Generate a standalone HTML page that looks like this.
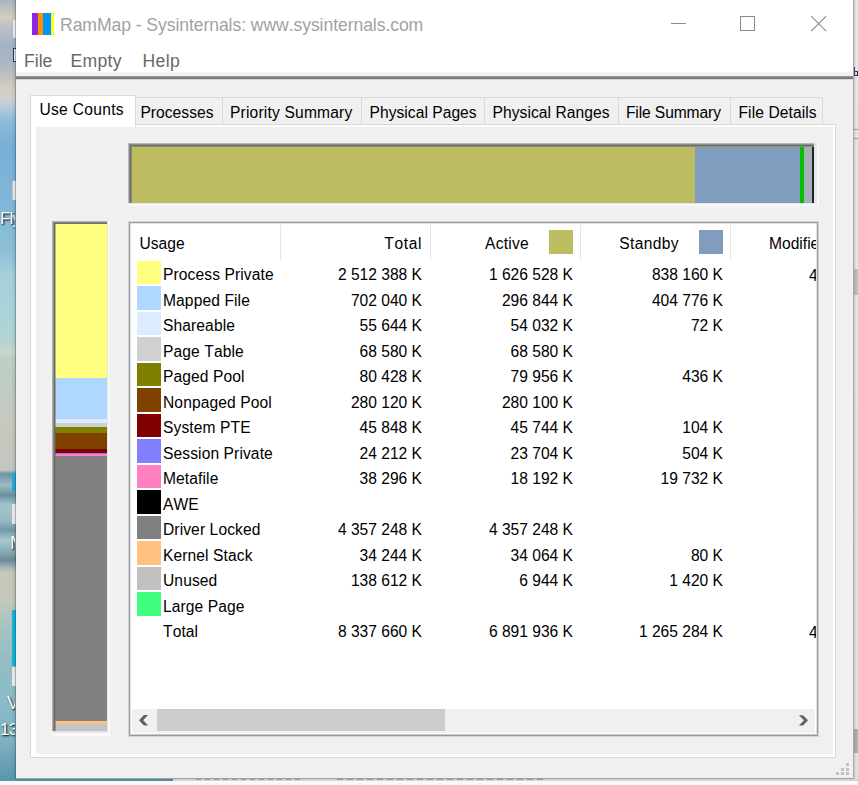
<!DOCTYPE html>
<html><head><meta charset="utf-8">
<style>
*{margin:0;padding:0;box-sizing:border-box}
html,body{width:858px;height:785px;overflow:hidden;background:#e9e9e9;font-family:"Liberation Sans",sans-serif;position:relative}
div,span,svg{position:absolute;display:block}
.t{white-space:pre;line-height:1;font-kerning:none}
.tt{font-size:17.6px;color:#a2a2a2}
.mn{font-size:17.6px;color:#686868}
.tb{font-size:15.6px;color:#000}
.lv{font-size:15.6px;color:#000}
</style></head><body>

<div style="left:0px;top:0px;width:16px;height:785px;background:linear-gradient(to bottom,#a8b4c0 0px,#c4c4c0 10px,#d4ccc0 17px,#b8c0c8 28px,#a4b4c4 45px,#a8b6c2 62px,#c0c0c0 76px,#d6ccc0 88px,#ccd0d4 100px,#b0c8dc 110px,#90bcdc 120px,#80b4d8 135px,#78b0d8 150px,#80b6d8 200px,#8cc0d8 250px,#a4d0dc 275px,#acd4d8 320px,#b8d4d0 345px,#cfd6c6 352px,#bcd0c8 358px,#c2ccc2 390px,#c6c8bf 430px,#c2c6be 470px,#6a94a4 474px,#9cbcc6 485px,#6890a0 495px,#a4c4cc 505px,#98bcc4 520px,#7098a8 530px,#a8c8d0 540px,#88aab4 552px,#6a8a96 560px,#a8b8b8 568px,#c8c8b8 573px,#c4c8bc 600px,#a8c4c4 625px,#94bcc4 660px,#8cbcc8 700px,#7eb2c2 740px,#5a98b0 778px,#5a98b0 781px,#f4f4f4 781px)"></div>
<div style="left:13px;top:20px;width:3px;height:18px;background:#f4f4f4"></div>
<div style="left:13px;top:48px;width:3px;height:14px;background:#f0f0f0;border-left:1px solid #303848;border-top:1px solid #303848;border-bottom:1px solid #303848"></div>
<div style="left:12px;top:181px;width:4px;height:19px;background:#f0f0f0;border-left:1px solid #c8c8c8"></div>
<div style="left:12px;top:473px;width:4px;height:18px;background:#20b0e0"></div>
<div style="left:12px;top:504px;width:4px;height:20px;background:#f0f0f0"></div>
<div style="left:12px;top:610px;width:4px;height:56px;background:#10b8e0"></div>
<div style="left:12px;top:667px;width:4px;height:19px;background:#f0f0f0"></div>
<div style="left:0;top:0;width:15px;height:785px;overflow:hidden"><span class="t" style="left:0px;top:210px;font-size:17px;letter-spacing:-1px;color:#fff;text-shadow:1px 1px 2px #000">Fly</span><span class="t" style="left:10px;top:534px;font-size:18px;color:#fff;text-shadow:1px 1px 2px #000">M</span><span class="t" style="left:7px;top:694px;font-size:18px;color:#fff;text-shadow:1px 1px 2px #000">V</span><span class="t" style="left:0px;top:721px;font-size:17px;letter-spacing:-0.5px;color:#fff;text-shadow:1px 1px 2px #000">13</span></div>
<div style="left:16px;top:779px;width:157px;height:3px;background:#4e8aa2"></div>
<div style="left:173px;top:778px;width:685px;height:4px;background:linear-gradient(to bottom,#c8c8c8,#e0e0e0)"></div>
<div style="left:0px;top:781px;width:858px;height:4px;background:#f8f8f8"></div>
<div style="left:196px;top:778px;width:106px;height:2px;background:repeating-linear-gradient(to right,#50607a 0,#50607a 5px,transparent 5px,transparent 9px);opacity:0.5"></div>
<div style="left:337px;top:778px;width:210px;height:2px;background:repeating-linear-gradient(to right,#50607a 0,#50607a 6px,transparent 6px,transparent 10px);opacity:0.5"></div>
<div style="left:854px;top:0px;width:4px;height:779px;background:linear-gradient(to bottom,#eaeaea,#e4e4e4)"></div>
<div style="left:854px;top:67px;width:1px;height:9px;background:#3050a0"></div>
<div style="left:855px;top:71px;width:3px;height:5px;border:1px solid #303030;border-left:none;background:#f0e0b0"></div>
<div style="left:854px;top:129px;width:4px;height:1px;background:#a0a0a0"></div>
<div style="left:854px;top:138px;width:4px;height:1px;background:#a0a0a0"></div>
<div style="left:854px;top:269px;width:4px;height:26px;background:#c0c0c0"></div>
<div style="left:854px;top:729px;width:4px;height:24px;background:#b0b0b0"></div>
<div style="left:854px;top:0px;width:3px;height:779px;background:linear-gradient(to right,rgba(0,0,0,0.12),rgba(0,0,0,0))"></div>
<div style="left:11px;top:0px;width:4px;height:779px;background:linear-gradient(to right,rgba(0,0,0,0),rgba(0,0,0,0.08))"></div>
<div style="left:15px;top:0px;width:1px;height:779px;background:rgba(30,45,55,0.35)"></div>
<div style="left:16px;top:0px;width:838px;height:779px;background:#f0f0f0;border-right:1px solid #a8a8a8;border-bottom:1px solid #a0a0a0"></div>
<div style="left:16px;top:0px;width:837px;height:73px;background:#fff"></div>
<div style="left:32px;top:13px;width:6px;height:22px;background:#8a2be2"></div>
<div style="left:38px;top:13px;width:5px;height:22px;background:#ff9000"></div>
<div style="left:43px;top:13px;width:8px;height:22px;background:#0096ff"></div>
<div style="left:51px;top:13px;width:3px;height:22px;background:#ffff20"></div>
<span class="t tt" style="left:60px;top:17px;letter-spacing:-0.08px">RamMap - Sysinternals: www.sysinternals.com</span>
<div style="left:671px;top:23px;width:15px;height:1px;background:#8a8a8a"></div>
<div style="left:740px;top:16px;width:15px;height:15px;border:1px solid #8a8a8a"></div>
<svg style="left:810px;top:15px" width="18" height="18" viewBox="0 0 18 18"><path d="M1.2 1.2L16.2 16.2M16.2 1.2L1.2 16.2" stroke="#8a8a8a" stroke-width="1.1" fill="none"/></svg>
<span class="t mn" style="left:24px;top:52.5px;">File</span>
<span class="t mn" style="left:70.5px;top:52.5px;letter-spacing:0.3px">Empty</span>
<span class="t mn" style="left:142.5px;top:52.5px;letter-spacing:0.4px">Help</span>
<div style="left:16px;top:72px;width:837px;height:8px;background:linear-gradient(to bottom,#f2f2f2 0,#f2f2f2 4px,#9c9c9c 4px,#9c9c9c 5px,#7a7a7a 5px,#7a7a7a 7px,#d4d4d4 7px,#d4d4d4 8px)"></div>
<div style="left:30px;top:124px;width:806px;height:634px;border:1px solid #d9d9d9;background:#fff"></div>
<div style="left:36px;top:127px;width:797px;height:627px;background:#f0f0f0"></div>
<div style="left:135px;top:97px;width:88px;height:27px;border:1px solid #d9d9d9;border-bottom:none;background:#f0f0f0"></div>
<span class="t tb" style="left:140.4px;top:104.75px;letter-spacing:0.04px">Processes</span>
<div style="left:222px;top:97px;width:140px;height:27px;border:1px solid #d9d9d9;border-bottom:none;background:#f0f0f0"></div>
<span class="t tb" style="left:230px;top:104.75px;letter-spacing:0.18px">Priority Summary</span>
<div style="left:361px;top:97px;width:124px;height:27px;border:1px solid #d9d9d9;border-bottom:none;background:#f0f0f0"></div>
<span class="t tb" style="left:369.5px;top:104.75px;letter-spacing:0.04px">Physical Pages</span>
<div style="left:484px;top:97px;width:135px;height:27px;border:1px solid #d9d9d9;border-bottom:none;background:#f0f0f0"></div>
<span class="t tb" style="left:492.5px;top:104.75px;letter-spacing:0.07px">Physical Ranges</span>
<div style="left:618px;top:97px;width:113px;height:27px;border:1px solid #d9d9d9;border-bottom:none;background:#f0f0f0"></div>
<span class="t tb" style="left:625.9px;top:104.75px;letter-spacing:-0.1px">File Summary</span>
<div style="left:730px;top:97px;width:93px;height:27px;border:1px solid #d9d9d9;border-bottom:none;background:#f0f0f0"></div>
<span class="t tb" style="left:738.5px;top:104.75px;letter-spacing:0.09px">File Details</span>
<div style="left:30px;top:95px;width:106px;height:32px;border:1px solid #d9d9d9;border-bottom:none;background:#fff"></div>
<span class="t tb" style="left:39.4px;top:102px;letter-spacing:0.3px">Use Counts</span>
<div style="left:128px;top:143px;width:691px;height:63px;background:#f8f8f8"></div>
<div style="left:128px;top:143px;width:689px;height:61px;background:#e6e6e6"></div>
<div style="left:128px;top:143px;width:686px;height:60px;background:#b8b8b8"></div>
<div style="left:129px;top:144px;width:685px;height:59px;background:#8c8c8c"></div>
<div style="left:130px;top:145px;width:684px;height:58px;background:#6c6c6c"></div>
<div style="left:131px;top:146px;width:683px;height:57px;background:#8e8c6a"></div>
<div style="left:132px;top:147px;width:563px;height:56px;background:#bebc60"></div>
<div style="left:695px;top:147px;width:105px;height:56px;background:#819dbd"></div>
<div style="left:800px;top:147px;width:3.5px;height:56px;background:#00c000"></div>
<div style="left:803.5px;top:147px;width:8.5px;height:56px;background:#a4afbb"></div>
<div style="left:812px;top:147px;width:2px;height:56px;background:#222222"></div>
<div style="left:131px;top:146px;width:1px;height:57px;background:#8e8c6a"></div>
<div style="left:52px;top:221px;width:58px;height:515px;background:#f8f8f8"></div>
<div style="left:52px;top:221px;width:56px;height:512px;background:#e6e6e6"></div>
<div style="left:52px;top:221px;width:55px;height:510px;background:#b0b0b0"></div>
<div style="left:53px;top:222px;width:54px;height:509px;background:#8a8a8a"></div>
<div style="left:54px;top:223px;width:53px;height:508px;background:#6c6c6c"></div>
<div style="left:55px;top:224px;width:52px;height:153.5px;background:#ffff80"></div>
<div style="left:55px;top:377.5px;width:52px;height:41.5px;background:#b0d8ff"></div>
<div style="left:55px;top:419px;width:52px;height:3.5px;background:#dcebff"></div>
<div style="left:55px;top:422.5px;width:52px;height:4.5px;background:#d0d0d0"></div>
<div style="left:55px;top:427px;width:52px;height:6px;background:#808000"></div>
<div style="left:55px;top:433px;width:52px;height:16.3px;background:#804000"></div>
<div style="left:55px;top:449.3px;width:52px;height:3.3px;background:#800000"></div>
<div style="left:55px;top:452.6px;width:52px;height:1.1px;background:#8080ff"></div>
<div style="left:55px;top:453.7px;width:52px;height:2.1px;background:#ff80c0"></div>
<div style="left:55px;top:455.8px;width:52px;height:265.0px;background:#808080"></div>
<div style="left:55px;top:720.8px;width:52px;height:3.2px;background:#ffc080"></div>
<div style="left:55px;top:724px;width:52px;height:7px;background:#c3c3c3"></div>
<div style="left:55px;top:224px;width:1px;height:507px;background:rgba(108,108,108,0.5)"></div>
<div style="left:128px;top:221px;width:691px;height:516px;background:#d2d4d8"></div>
<div style="left:129px;top:222px;width:689px;height:514px;background:#959aa2"></div>
<div style="left:130px;top:223px;width:687px;height:512px;background:#e2e4e6"></div>
<div style="left:131px;top:224px;width:685px;height:510px;background:#fff"></div>
<div style="left:129px;top:734px;width:689px;height:1px;background:#c4c7cc"></div>
<div style="left:280px;top:225px;width:1px;height:35px;background:#e5e5e5"></div>
<div style="left:430px;top:225px;width:1px;height:35px;background:#e5e5e5"></div>
<div style="left:580px;top:225px;width:1px;height:35px;background:#e5e5e5"></div>
<div style="left:730px;top:225px;width:1px;height:35px;background:#e5e5e5"></div>
<span class="t lv" style="left:139.5px;top:235.5px;">Usage</span>
<span class="t lv" style="right:436px;top:235.5px;letter-spacing:0.6px">Total</span>
<span class="t lv" style="right:329px;top:235.5px;letter-spacing:0.25px">Active</span>
<div style="left:549px;top:230px;width:24px;height:24px;background:#bebc60"></div>
<span class="t lv" style="right:179px;top:235.5px;letter-spacing:0.35px">Standby</span>
<div style="left:699px;top:230px;width:24px;height:24px;background:#819dbd"></div>
<div style="left:730px;top:223px;width:86px;height:40px;overflow:hidden"><span class="t lv" style="left:39px;top:12.5px">Modified</span></div>
<div style="left:137px;top:260.5px;width:24px;height:23.5px;background:#ffff80"></div>
<span class="t lv" style="left:163px;top:267.0px;letter-spacing:0.1px">Process Private</span>
<span class="t lv" style="right:436px;top:267.0px;">2 512 388 K</span>
<span class="t lv" style="right:285px;top:267.0px;">1 626 528 K</span>
<span class="t lv" style="right:135px;top:267.0px;">838 160 K</span>
<div style="left:730px;top:261.5px;width:86px;height:22px;overflow:hidden"><span class="t lv" style="left:79px;top:6.5px">4</span></div>
<div style="left:137px;top:286.0px;width:24px;height:23.5px;background:#b0d8ff"></div>
<span class="t lv" style="left:163px;top:292.5px;letter-spacing:0.1px">Mapped File</span>
<span class="t lv" style="right:436px;top:292.5px;">702 040 K</span>
<span class="t lv" style="right:285px;top:292.5px;">296 844 K</span>
<span class="t lv" style="right:135px;top:292.5px;">404 776 K</span>
<div style="left:137px;top:311.5px;width:24px;height:23.5px;background:#dcebff"></div>
<span class="t lv" style="left:163px;top:318.0px;letter-spacing:0.1px">Shareable</span>
<span class="t lv" style="right:436px;top:318.0px;">55 644 K</span>
<span class="t lv" style="right:285px;top:318.0px;">54 032 K</span>
<span class="t lv" style="right:135px;top:318.0px;">72 K</span>
<div style="left:137px;top:337.0px;width:24px;height:23.5px;background:#d0d0d0"></div>
<span class="t lv" style="left:163px;top:343.5px;letter-spacing:0.1px">Page Table</span>
<span class="t lv" style="right:436px;top:343.5px;">68 580 K</span>
<span class="t lv" style="right:285px;top:343.5px;">68 580 K</span>
<div style="left:137px;top:362.5px;width:24px;height:23.5px;background:#808000"></div>
<span class="t lv" style="left:163px;top:369.0px;letter-spacing:0.1px">Paged Pool</span>
<span class="t lv" style="right:436px;top:369.0px;">80 428 K</span>
<span class="t lv" style="right:285px;top:369.0px;">79 956 K</span>
<span class="t lv" style="right:135px;top:369.0px;">436 K</span>
<div style="left:137px;top:388.0px;width:24px;height:23.5px;background:#804000"></div>
<span class="t lv" style="left:163px;top:394.5px;letter-spacing:0.1px">Nonpaged Pool</span>
<span class="t lv" style="right:436px;top:394.5px;">280 120 K</span>
<span class="t lv" style="right:285px;top:394.5px;">280 100 K</span>
<div style="left:137px;top:413.5px;width:24px;height:23.5px;background:#800000"></div>
<span class="t lv" style="left:163px;top:420.0px;letter-spacing:0.1px">System PTE</span>
<span class="t lv" style="right:436px;top:420.0px;">45 848 K</span>
<span class="t lv" style="right:285px;top:420.0px;">45 744 K</span>
<span class="t lv" style="right:135px;top:420.0px;">104 K</span>
<div style="left:137px;top:439.0px;width:24px;height:23.5px;background:#8080ff"></div>
<span class="t lv" style="left:163px;top:445.5px;letter-spacing:0.1px">Session Private</span>
<span class="t lv" style="right:436px;top:445.5px;">24 212 K</span>
<span class="t lv" style="right:285px;top:445.5px;">23 704 K</span>
<span class="t lv" style="right:135px;top:445.5px;">504 K</span>
<div style="left:137px;top:464.5px;width:24px;height:23.5px;background:#ff80c0"></div>
<span class="t lv" style="left:163px;top:471.0px;letter-spacing:0.1px">Metafile</span>
<span class="t lv" style="right:436px;top:471.0px;">38 296 K</span>
<span class="t lv" style="right:285px;top:471.0px;">18 192 K</span>
<span class="t lv" style="right:135px;top:471.0px;">19 732 K</span>
<div style="left:137px;top:490.0px;width:24px;height:23.5px;background:#000000"></div>
<span class="t lv" style="left:163px;top:496.5px;letter-spacing:0.1px">AWE</span>
<div style="left:137px;top:515.5px;width:24px;height:23.5px;background:#808080"></div>
<span class="t lv" style="left:163px;top:522.0px;letter-spacing:0.1px">Driver Locked</span>
<span class="t lv" style="right:436px;top:522.0px;">4 357 248 K</span>
<span class="t lv" style="right:285px;top:522.0px;">4 357 248 K</span>
<div style="left:137px;top:541.0px;width:24px;height:23.5px;background:#ffc080"></div>
<span class="t lv" style="left:163px;top:547.5px;letter-spacing:0.1px">Kernel Stack</span>
<span class="t lv" style="right:436px;top:547.5px;">34 244 K</span>
<span class="t lv" style="right:285px;top:547.5px;">34 064 K</span>
<span class="t lv" style="right:135px;top:547.5px;">80 K</span>
<div style="left:137px;top:566.5px;width:24px;height:23.5px;background:#c0c0c0"></div>
<span class="t lv" style="left:163px;top:573.0px;letter-spacing:0.1px">Unused</span>
<span class="t lv" style="right:436px;top:573.0px;">138 612 K</span>
<span class="t lv" style="right:285px;top:573.0px;">6 944 K</span>
<span class="t lv" style="right:135px;top:573.0px;">1 420 K</span>
<div style="left:137px;top:592.0px;width:24px;height:23.5px;background:#40ff80"></div>
<span class="t lv" style="left:163px;top:598.5px;letter-spacing:0.1px">Large Page</span>
<span class="t lv" style="left:163px;top:624.0px;letter-spacing:0.1px">Total</span>
<span class="t lv" style="right:436px;top:624.0px;">8 337 660 K</span>
<span class="t lv" style="right:285px;top:624.0px;">6 891 936 K</span>
<span class="t lv" style="right:135px;top:624.0px;">1 265 284 K</span>
<div style="left:730px;top:618.5px;width:86px;height:22px;overflow:hidden"><span class="t lv" style="left:79px;top:6.5px">4</span></div>
<div style="left:132px;top:709px;width:683px;height:24px;background:#f0f0f0"></div>
<div style="left:157px;top:709px;width:288px;height:22px;background:#cdcdcd"></div>
<svg style="left:0px;top:0px" width="858" height="785"><polygon points="148.1,715 143.9,715 139,720.2 143.9,725.4 148.1,725.4 143.2,720.2" fill="#606060"/><polygon points="798.9,715.2 802.9,715.2 808.05,720.2 802.9,725.4 798.9,725.4 804,720.2" fill="#606060"/></svg>
<div style="left:846px;top:763px;width:3px;height:3px;background:#c2c2c2"></div>
<div style="left:841px;top:767.5px;width:3px;height:3px;background:#c2c2c2"></div>
<div style="left:846px;top:767.5px;width:3px;height:3px;background:#c2c2c2"></div>
<div style="left:836px;top:772px;width:3px;height:3px;background:#c2c2c2"></div>
<div style="left:841px;top:772px;width:3px;height:3px;background:#c2c2c2"></div>
<div style="left:846px;top:772px;width:3px;height:3px;background:#c2c2c2"></div>
</body></html>
